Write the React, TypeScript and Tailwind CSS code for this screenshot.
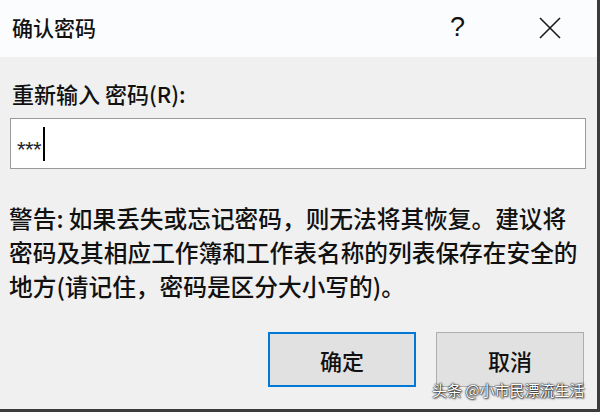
const cjk = "font-['Noto_Sans_CJK_SC','Noto_Sans',sans-serif] font-medium";

function CloseGlyph() {
  return (
    <svg width="22" height="22" viewBox="0 0 22 22" className="block">
      <path d="M1 1 L21 21 M21 1 L1 21" stroke="#1a1a1a" strokeWidth="1.6" fill="none" />
    </svg>
  );
}

function TitleBar() {
  return (
    <div className="flex h-[57px] items-center bg-[#fbfcfd] pl-[12px]">
      <span className={`${cjk} text-[21px] leading-none text-[#111] mt-[-2px]`}>确认密码</span>
      <span className="ml-auto mr-[74px] font-['Liberation_Sans',sans-serif] text-[27px] leading-none text-[#111] mt-[-2px]">
        ?
      </span>
      <span className="mr-[36px] mt-[-2px]">
        <CloseGlyph />
      </span>
    </div>
  );
}

function PasswordField() {
  return (
    <div className="mt-[10px] ml-[10px] flex h-[51px] w-[576px] items-center border border-[#9a9a9a] bg-white pl-[6px]">
      <span className="mt-[12px] font-['Liberation_Sans',sans-serif] text-[22px] leading-none tracking-[-0.5px] text-[#222]">
        ***
      </span>
      <span className="ml-[2px] h-[34px] w-[2px] bg-black" />
    </div>
  );
}

function DialogButton({ label, primary }: { label: string; primary?: boolean }) {
  return (
    <button
      className={`${cjk} flex h-[55px] w-[148px] items-center justify-center bg-[#e1e1e1] text-[22px] leading-none text-[#111] ${
        primary ? "border-2 border-[#0078d7]" : "border border-[#adadad]"
      }`}
    >
      {label}
    </button>
  );
}

export default function App() {
  return (
    <div className="relative flex h-[412px] w-[600px] flex-col overflow-hidden bg-[#f0f0f0] border-r-[3px] border-b-[3px] border-[#3c3c3c]">
      <TitleBar />

      <div className="flex flex-1 flex-col">
        <div className={`${cjk} mt-[21px] pl-[12px] text-[22px] leading-[30px] text-[#111]`}>
          重新输入 密码(R):
        </div>

        <PasswordField />

        <div className={`${cjk} mt-[32px] pl-[9px] text-[23.7px] leading-[34px] text-[#111] whitespace-nowrap`}>
          <div>警告: 如果丢失或忘记密码，则无法将其恢复。建议将</div>
          <div>密码及其相应工作簿和工作表名称的列表保存在安全的</div>
          <div>地方(请记住，密码是区分大小写的)。</div>
        </div>

        <div className="mt-[29px] flex gap-[20px] pl-[268px]">
          <DialogButton label="确定" primary />
          <DialogButton label="取消" />
        </div>
      </div>

      <span
        className="absolute left-[432px] top-[382px] font-['Noto_Sans_CJK_SC',sans-serif] text-[15px] leading-none text-white [text-shadow:0_0_1px_#000,0_0_2px_rgba(0,0,0,0.9),1px_1px_2px_rgba(0,0,0,0.7)]"
      >
        头条 @小市民漂流生活
      </span>
    </div>
  );
}
